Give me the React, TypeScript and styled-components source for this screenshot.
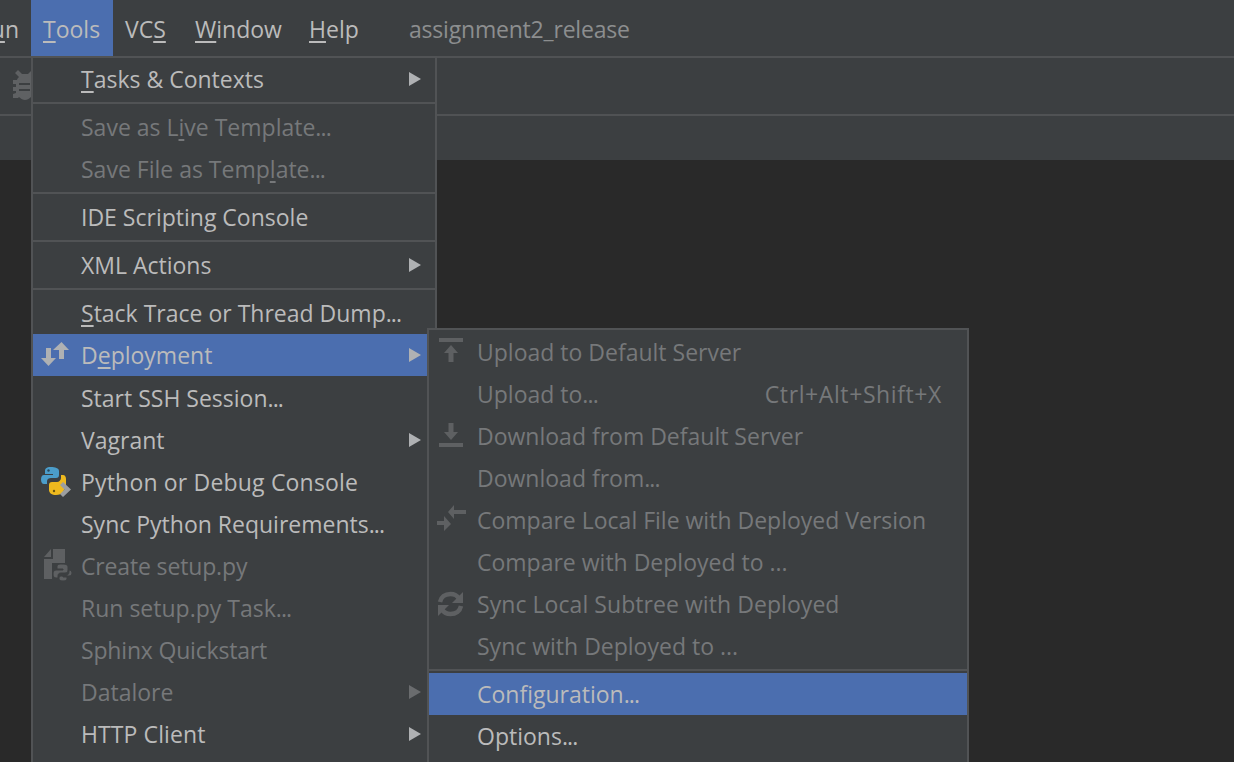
import React from "react";
import styled, { createGlobalStyle } from "styled-components";

const Global = createGlobalStyle`
  html, body { margin: 0; padding: 0; height: 100%; background: #292929; overflow: hidden; }
  #root { height: 762px; }
`;

const Page = styled.div`
  position: relative;
  width: 1234px;
  height: 762px;
  overflow: hidden;
  display: flex;
  flex-direction: column;
  background: #292929;
  font-family: "Open Sans", "Noto Sans", sans-serif;
  font-size: 23px;
  color: #bbbbbb;
`;

const MenuBar = styled.div`
  height: 56px;
  flex: none;
  display: flex;
  align-items: stretch;
  background: #3c3f41;
  border-bottom: 2px solid #505254;
`;

const MenuItem = styled.div<{ $active?: boolean; $w: number }>`
  width: ${(p) => p.$w}px;
  flex: none;
  display: flex;
  align-items: center;
  white-space: nowrap;
  overflow: hidden;
  background: ${(p) => (p.$active ? "#4b6eaf" : "transparent")};
  color: #bbbbbb;
  padding-left: 12px;
  padding-top: 2px;
  box-sizing: border-box;
`;

const CutItem = styled(MenuItem)`
  padding-left: 0;
  padding-right: 12px;
  justify-content: flex-end;
`;

const ProjectTitle = styled.div`
  display: flex;
  align-items: center;
  color: #8c8e8f;
  margin-left: 13px;
  padding-top: 2px;
  letter-spacing: -0.2px;
`;

const Toolbar = styled.div`
  height: 56px;
  flex: none;
  display: flex;
  align-items: center;
  padding-left: 8px;
  padding-bottom: 4px;
  box-sizing: content-box;
  height: 52px;
  background: #3c3f41;
  border-bottom: 2px solid #505254;
`;

const NavBar = styled.div`
  height: 44px;
  flex: none;
  background: #3c3f41;
`;

const Editor = styled.div`
  flex: 1;
  background: #292929;
`;

const Menu = styled.div<{ $left: number; $top: number; $width: number; $inset?: number }>`
  position: absolute;
  left: ${(p) => p.$left}px;
  top: ${(p) => p.$top}px;
  width: ${(p) => p.$width}px;
  box-sizing: border-box;
  background: #3c3f41;
  border: 2px solid #515355;
  padding-top: ${(p) => p.$inset ?? 0}px;
  padding-bottom: 30px;
  display: flex;
  flex-direction: column;
`;

const Row = styled.div<{ $selected?: boolean; $disabled?: boolean; $after?: number }>`
  position: relative;
  height: 42px;
  flex: none;
  display: flex;
  align-items: center;
  padding-left: 48px;
  margin-bottom: ${(p) => p.$after ?? 0}px;
  white-space: nowrap;
  background: ${(p) => (p.$selected ? "#4b6eaf" : "transparent")};
  color: ${(p) => (p.$disabled ? "#76787a" : "#bbbbbb")};
`;

const Label = styled.span<{ $track?: number }>`
  letter-spacing: ${(p) => p.$track ?? 0}px;
`;

const Dots = styled.span`
  letter-spacing: -0.9px;
`;

const Separator = styled.div`
  height: 6px;
  flex: none;
  display: flex;
  align-items: center;
  &::after {
    content: "";
    display: block;
    width: 100%;
    height: 2px;
    background: #515355;
  }
`;

const IconSlot = styled.span`
  position: absolute;
  left: 4px;
  top: 50%;
  transform: translateY(-50%);
  width: 32px;
  height: 32px;
  display: flex;
`;

const Arrow = styled.span<{ $disabled?: boolean }>`
  position: absolute;
  right: 14px;
  top: 50%;
  transform: translateY(-50%);
  width: 0;
  height: 0;
  border-top: 7.5px solid transparent;
  border-bottom: 7.5px solid transparent;
  border-left: 12px solid ${(p) => (p.$disabled ? "#6a6c6e" : "#afb1b3")};
`;

const Shortcut = styled.span`
  position: absolute;
  right: 25px;
  top: 50%;
  transform: translateY(-50%);
  letter-spacing: 0.6px;
`;

const U = styled.span`
  text-decoration: underline;
  text-decoration-thickness: 2px;
  text-underline-offset: 3px;
`;

const Svg = styled.svg`
  width: 32px;
  height: 32px;
  display: block;
  overflow: visible;
`;

const DeployIcon = () => (
  <Svg viewBox="0 0 32 32" fill="#afb1b3">
    <path d="M9 9h5v10h5l-7.500 8L4 19h5z" />
    <path d="M24.500 3L32 11h-5v9h-5v-9h-6z" />
  </Svg>
);

const PythonIcon = () => (
  <Svg viewBox="0 0 32 32">
    <path d="M14 1C9 1 8 3 8 5v3h8v1H7c-2 0-3 2-3 4.500S5 18 7 18h3v-3c0-2 2-3 4-3h5c2 0 3-1 3-3V5c0-3-4-4-8-4z" fill="#4b9dca" />
    <circle cx="11.500" cy="4.500" r="1.200" fill="#27485c" />
    <path d="M24 9v3c0 2-2 4-4 4h-5c-2 0-3 1-3 3v5c0 3 3 5 7 5 3 0 6-1 7-3l3-6V13c0-2-1-4-3-4z" fill="#eeb91e" />
    <circle cx="17" cy="25" r="1.200" fill="#6b5410" />
    <path d="M26 16l8 7.500-8 7.500-3-3 4.500-4.500L23 19z" fill="#9c9ea0" />
  </Svg>
);

const SetupIcon = () => (
  <Svg viewBox="0 0 32 32" fill="#5e6062">
    <path d="M16-1h12v14H15v16H7V9h9z" />
    <path d="M7 7l7-8v8z" />
    <path d="M25 14c-4 0-5 1-5 3v2h6v1h-7c-2 0-3 2-3 4s1 4 3 4h2v-2c0-2 1-3 3-3h4c2 0 3-1 3-3v-3c0-2-2-3-6-3z" stroke="#3c3f41" strokeWidth="1" />
    <path d="M32 20v2c0 2-2 4-4 4h-4c-1 0-2 1-2 2v1c0 1 2 2 4 2s4-1 4-2v-2h-4v-1h6c2 0 3-2 3-3s-1-3-3-3z" stroke="#3c3f41" strokeWidth="1" />
  </Svg>
);

const UploadIcon = () => (
  <Svg viewBox="0 0 32 32" fill="#5e6062">
    <rect x="6" y="2" width="24" height="4" />
    <path d="M18 9l7 8h-4.500v9h-5v-9H11z" />
  </Svg>
);

const DownloadIcon = () => (
  <Svg viewBox="0 0 32 32" fill="#5e6062">
    <path d="M15.500 3h5v9H25l-7 8-7-8h4.500z" />
    <rect x="6" y="23" width="24" height="4" />
  </Svg>
);

const CompareIcon = () => (
  <Svg viewBox="0 0 32 32" fill="#5e6062">
    <path d="M21 1l-6 7 6 7V10h12V6H21z" />
    <path d="M11 12l7 8-7 7v-6H4v-4h7z" />
  </Svg>
);

const SyncIcon = () => (
  <Svg viewBox="0 0 32 32" fill="none" stroke="#5e6062" strokeWidth="4.500">
    <path d="M7 14c1-5 5-8 10.500-8 4 0 7 2 8.500 4.500" />
    <path d="M28 18c-1 5-5 8-10.500 8-4 0-7-2-8.500-4.500" />
    <path d="M30 4v11H19z" fill="#5e6062" stroke="none" />
    <path d="M5 28V17h11z" fill="#5e6062" stroke="none" />
  </Svg>
);

const BugIcon = () => (
  <Svg viewBox="0 0 32 32" fill="#5f6163">
    <path d="M10 2l4 4h6l4-4 3 3-4 4c1 1 2 2 2 3h4v4h-3v3h3v4h-3v2l3 1v4h-5l-1-1c-2 2-4 3-6 3s-4-1-6-3l-1 1H5v-4l3-1v-2H5v-4h3v-3H5v-4h4c0-1 1-2 2-3L7 5z" />
    <path d="M11 15h11v2H11zM11 21h11v2H11z" fill="#3c3f41" />
  </Svg>
);

type Item = {
  label: React.ReactNode;
  disabled?: boolean;
  selected?: boolean;
  arrow?: boolean;
  icon?: React.ReactNode;
  shortcut?: string;
  track?: number;
  after?: number;
};

const MenuRow = ({ item }: { item: Item }) => (
  <Row $selected={item.selected} $disabled={item.disabled} $after={item.after}>
    {item.icon && <IconSlot>{item.icon}</IconSlot>}
    <Label $track={item.track}>{item.label}</Label>
    {item.shortcut && <Shortcut>{item.shortcut}</Shortcut>}
    {item.arrow && <Arrow $disabled={item.disabled} />}
  </Row>
);

export default function App() {
  return (
    <Page>
      <Global />
      <MenuBar>
        <CutItem $w={31}>
          <span>R<U>u</U>n</span>
        </CutItem>
        <MenuItem $w={82} $active>
          <span><U>T</U>ools</span>
        </MenuItem>
        <MenuItem $w={70}>
          <span>VC<U>S</U></span>
        </MenuItem>
        <MenuItem $w={114}>
          <span><U>W</U>indow</span>
        </MenuItem>
        <MenuItem $w={99}>
          <span><U>H</U>elp</span>
        </MenuItem>
        <ProjectTitle>assignment2_release</ProjectTitle>
      </MenuBar>
      <Toolbar>
        <BugIcon />
      </Toolbar>
      <NavBar />
      <Editor />

      <Menu $left={31} $top={56} $width={406}>
        <MenuRow item={{ label: <><U>T</U>asks &amp; Contexts</>, arrow: true }} />
        <Separator />
        <MenuRow item={{ label: <>Save as L<U>i</U>ve Template<Dots>...</Dots></>, disabled: true }} />
        <MenuRow item={{ label: <>Save File as Temp<U>l</U>ate<Dots>...</Dots></>, disabled: true }} />
        <Separator />
        <MenuRow item={{ label: "IDE Scripting Console" }} />
        <Separator />
        <MenuRow item={{ label: "XML Actions", arrow: true }} />
        <Separator />
        <MenuRow item={{ label: <><U>S</U>tack Trace or Thread Dump<Dots>...</Dots></> }} />
        <MenuRow item={{ label: <>D<U>e</U>ployment</>, selected: true, arrow: true, icon: <DeployIcon />, after: 1 }} />
        <MenuRow item={{ label: <>Start SSH Session<Dots>...</Dots></> }} />
        <MenuRow item={{ label: "Vagrant", arrow: true }} />
        <MenuRow item={{ label: "Python or Debug Console", icon: <PythonIcon />, track: 0.18 }} />
        <MenuRow item={{ label: <>Sync Python Requirements<Dots>...</Dots></> }} />
        <MenuRow item={{ label: "Create setup.py", disabled: true, icon: <SetupIcon />, track: -0.15 }} />
        <MenuRow item={{ label: <>Run setup.py Task<Dots>...</Dots></>, disabled: true }} />
        <MenuRow item={{ label: "Sphinx Quickstart", disabled: true, track: -0.18 }} />
        <MenuRow item={{ label: "Datalore", disabled: true, arrow: true }} />
        <MenuRow item={{ label: "HTTP Client", arrow: true, track: 0.1 }} />
      </Menu>

      <Menu $left={427} $top={328} $width={542} $inset={1}>
        <MenuRow item={{ label: "Upload to Default Server", disabled: true, icon: <UploadIcon /> }} />
        <MenuRow item={{ label: <>Upload to<Dots>...</Dots></>, disabled: true, shortcut: "Ctrl+Alt+Shift+X" }} />
        <MenuRow item={{ label: "Download from Default Server", disabled: true, icon: <DownloadIcon /> }} />
        <MenuRow item={{ label: <>Download from<Dots>...</Dots></>, disabled: true }} />
        <MenuRow item={{ label: "Compare Local File with Deployed Version", disabled: true, icon: <CompareIcon /> }} />
        <MenuRow item={{ label: "Compare with Deployed to ...", disabled: true }} />
        <MenuRow item={{ label: "Sync Local Subtree with Deployed", disabled: true, icon: <SyncIcon />, track: 0.06 }} />
        <MenuRow item={{ label: "Sync with Deployed to ...", disabled: true }} />
        <Separator />
        <MenuRow item={{ label: <>Configuration<Dots>...</Dots></>, selected: true }} />
        <MenuRow item={{ label: <>Options<Dots>...</Dots></> }} />
      </Menu>
    </Page>
  );
}
